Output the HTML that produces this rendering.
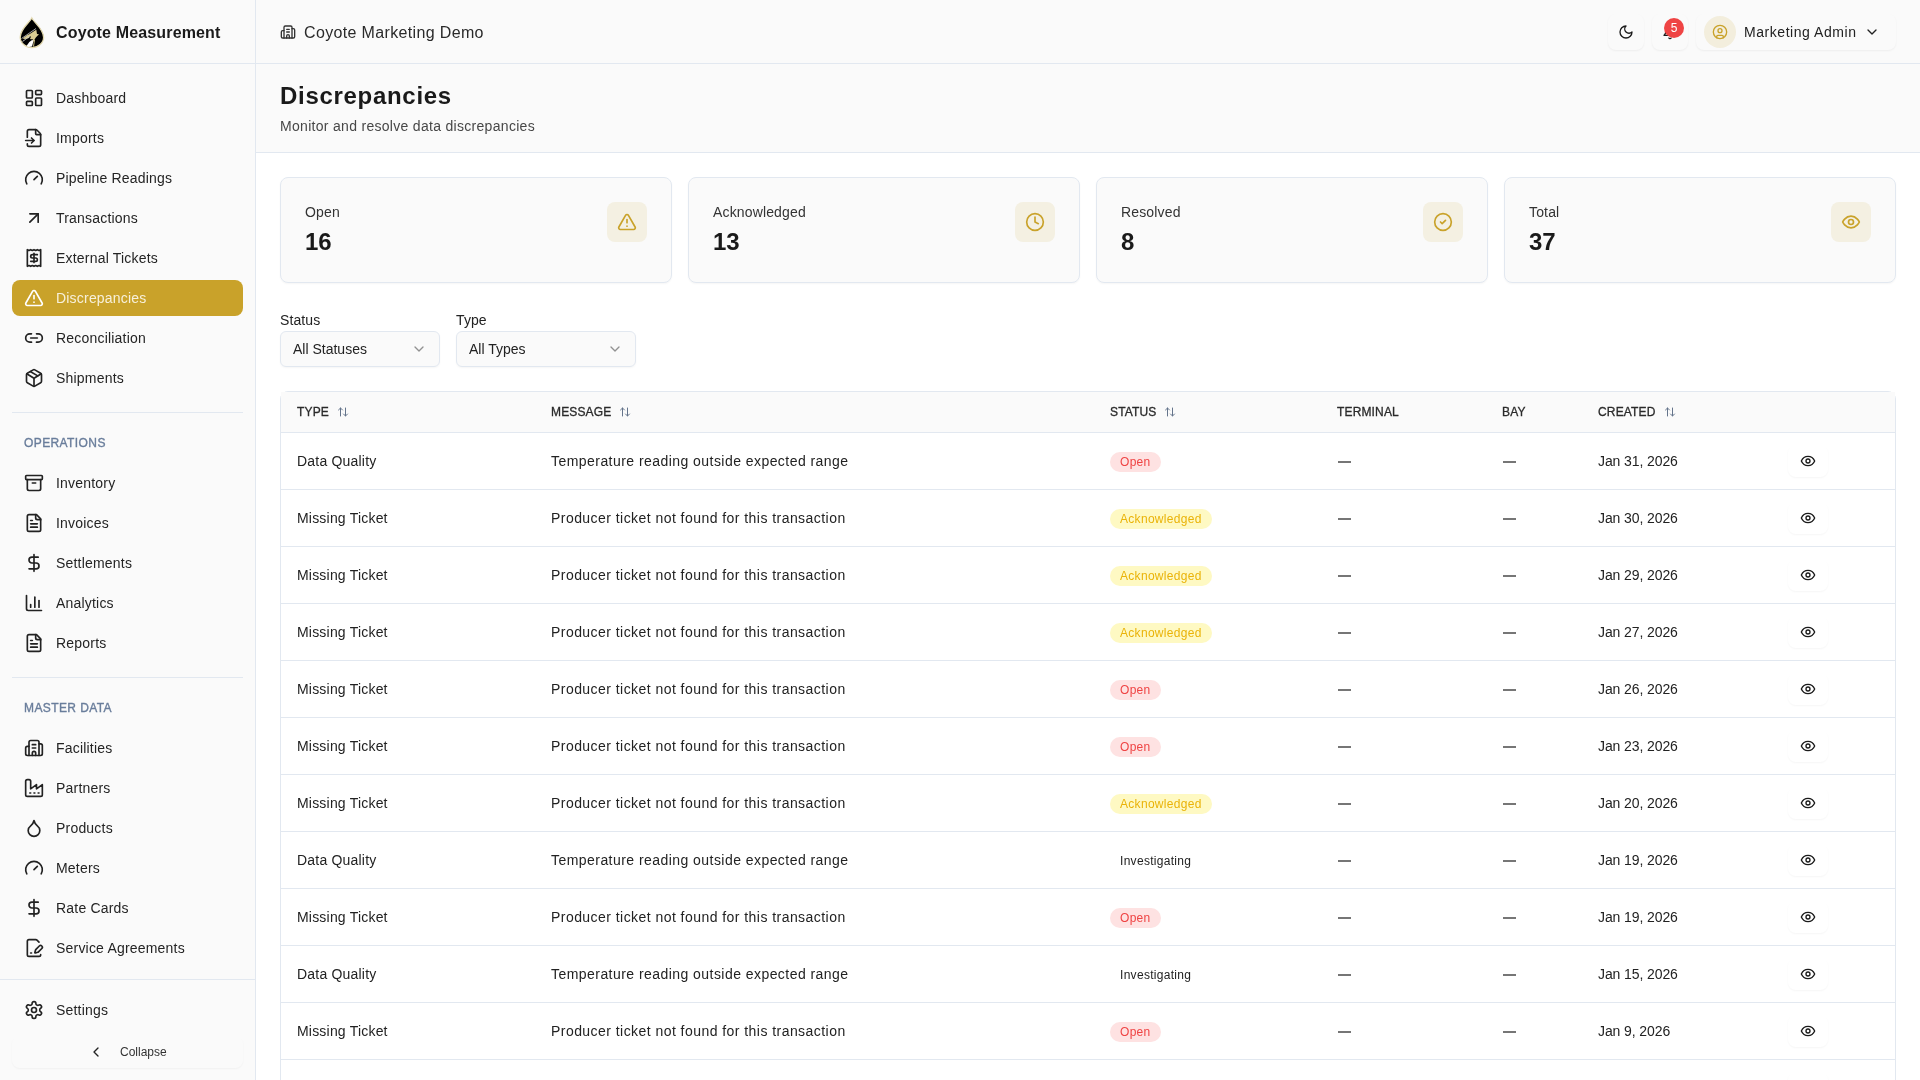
<!DOCTYPE html>
<html><head><meta charset="utf-8"><style>
*{box-sizing:border-box;margin:0;padding:0}
html,body{width:1920px;height:1080px;overflow:hidden;background:#fff;font-family:"Liberation Sans",sans-serif;color:#333}
svg.i{fill:none;stroke:currentColor;stroke-linecap:round;stroke-linejoin:round;display:block}
#sb{position:absolute;left:0;top:0;width:256px;height:1080px;background:#fafafa;border-right:1px solid #e2e8f0}
#sb .brand{position:absolute;left:0;top:0;width:255px;height:64px;border-bottom:1px solid #e2e8f0}
#sb .brand .t{position:absolute;left:56px;top:23px;font-size:16px;font-weight:bold;color:#1a1a1a;letter-spacing:0.15px;line-height:20px;white-space:nowrap}
.it{position:absolute;left:12px;width:231px;height:36px;border-radius:8px;color:#242424}
.it svg{position:absolute;left:12px;top:8px;color:#222}
.it span{position:absolute;left:44px;top:8px;font-size:14px;line-height:20px;letter-spacing:0.2px;white-space:nowrap}
.it.act{background:#c9a22a}
.it.act svg{color:#fff}
.it.act span{color:#f7f0da}
.sec{position:absolute;left:24px;margin-top:1px;font-size:12px;font-weight:normal;-webkit-text-stroke:0.35px #697d9b;letter-spacing:0.4px;color:#697d9b;line-height:16px}
.div{position:absolute;left:12px;width:231px;height:1px;background:#e2e8f0}
.foot{position:absolute;left:0;top:979px;width:255px;height:1px;background:#e2e8f0}
.collapse{position:absolute;left:12px;top:1036px;width:231px;height:32px;border-radius:8px;box-shadow:0 1px 2px rgba(0,0,0,0.04);color:#333}
.collapse svg{position:absolute;left:76px;top:8px;color:#222}
.collapse span{position:absolute;left:108px;top:8px;font-size:12px;line-height:16px}
#hd{position:absolute;left:256px;top:0;width:1664px;height:64px;background:#fafafa;border-bottom:1px solid #e2e8f0}
.org{position:absolute;left:24px;top:22px;height:20px}
.org svg{position:absolute;left:0;top:2px;color:#333}
.org span{position:absolute;left:24px;top:1px;font-size:16px;line-height:20px;white-space:nowrap;color:#2a2a2a;letter-spacing:0.35px}
.hbtn{position:absolute;top:14px;width:36px;height:36px;border-radius:8px;background:#fafafa;box-shadow:0 1px 2px rgba(0,0,0,0.05)}
.hbtn svg{position:absolute;left:10px;top:10px;color:#1a1a1a}
.badge{position:absolute;left:12px;top:4px;width:20px;height:20px;border-radius:10px;background:#ef4444;color:#fff;font-size:12px;line-height:20px;text-align:center}
.umenu{position:absolute;left:1440px;top:14px;width:200px;height:36px;border-radius:8px;background:#fafafa;box-shadow:0 1px 2px rgba(0,0,0,0.05)}
.umenu .av{position:absolute;left:8px;top:2px;width:32px;height:32px;border-radius:16px;background:#f3eedd;color:#c9a22a}
.umenu .av svg{position:absolute;left:8px;top:8px}
.umenu span{position:absolute;left:48px;top:8px;font-size:14px;line-height:20px;color:#222;white-space:nowrap;letter-spacing:0.55px}
.umenu > svg{position:absolute;left:168px;top:10px;color:#222}
#ph{position:absolute;left:256px;top:64px;width:1664px;height:89px;background:#fafafa;border-bottom:1px solid #e2e8f0}
#ph h1{position:absolute;left:24px;top:16px;font-size:24px;line-height:32px;font-weight:bold;color:#1a1a1a;white-space:nowrap;letter-spacing:0.7px}
#ph p{position:absolute;left:24px;top:52px;font-size:14px;line-height:20px;color:#474747;white-space:nowrap;letter-spacing:0.3px}
.card{position:absolute;top:177px;width:392px;height:106px;background:#fafafa;border:1px solid #e2e8f0;border-radius:8px;box-shadow:0 1px 2px rgba(0,0,0,0.04)}
.cl{position:absolute;left:24px;top:24px;font-size:14px;line-height:20px;color:#333;letter-spacing:0.15px}
.cn{position:absolute;left:24px;top:48px;font-size:24px;line-height:32px;font-weight:bold;color:#1a1a1a}
.cic{position:absolute;left:326px;top:24px;width:40px;height:40px;border-radius:8px;background:#f4f0e2;color:#c9a22a}
.cic svg{position:absolute;left:10px;top:10px}
.flabel{position:absolute;top:310px;font-size:14px;line-height:20px;color:#222;letter-spacing:0.1px}
.sel{position:absolute;top:331px;height:36px;background:#fafafa;border:1px solid #e2e8f0;border-radius:6px;box-shadow:0 1px 2px rgba(0,0,0,0.04)}
.sel span{position:absolute;left:12px;top:7px;font-size:14px;line-height:20px;color:#222;letter-spacing:0px}
.sel svg{position:absolute;right:12px;top:9px;color:#777;opacity:.8}
#tbl{position:absolute;left:280px;top:391px;width:1616px;height:760px;border:1px solid #e2e8f0;border-radius:8px;background:#fff}
.th{position:absolute;left:0;top:0;width:100%;height:41px;background:#fafafa;border-bottom:1px solid #e2e8f0}
.hc{position:absolute;top:12px;height:16px;font-size:12px;line-height:16px;font-weight:normal;-webkit-text-stroke:0.3px #2a2a2a;letter-spacing:0.15px;color:#2a2a2a;white-space:nowrap;display:flex;align-items:center}
.hc svg{margin-left:8px;color:#64748b}
.tr{position:absolute;left:0;width:100%;height:57px;border-bottom:1px solid #e2e8f0}
.c{position:absolute;top:18px;font-size:14px;line-height:20px;color:#222;white-space:nowrap;letter-spacing:0.3px}
.bdg{position:absolute;top:19px;letter-spacing:0.3px;height:20px;border-radius:10px;padding:0 10px;font-size:12px;line-height:20px;white-space:nowrap}
.b-open{background:#fee2e2;color:#ef4444}
.b-ack{background:#fef9c3;color:#eab308}
.b-inv{background:transparent;color:#222}
.dash{position:absolute;top:28px;width:12.6px;height:1.7px;background:#767676}
.eb{position:absolute;left:1507px;top:12px;width:40px;height:32px;border-radius:8px;box-shadow:0 1px 2px rgba(0,0,0,0.04)}
.eb svg{position:absolute;left:12px;top:8px;color:#1a1a1a}

.ls45{letter-spacing:0.45px}.ls2{letter-spacing:0.2px}.lsd{letter-spacing:-0.1px}
#root{position:absolute;left:0;top:0;width:1920px;height:1080px;will-change:transform}

</style></head><body><div id="root">
<div id="sb">
<div class="brand"><svg style="position:absolute;left:16px;top:14px" width="32" height="36" viewBox="0 0 32 36"><path d="M15.8 4 C17.8 8.3 27.6 15 27.6 23.3 A11.7 10.3 0 0 1 4.2 23.3 C4.2 15 13.8 8.3 15.8 4Z" fill="#000" stroke="#e3d9ae" stroke-width="1.3"/><path d="M6.5 24.5 L11 21.3 L13.3 20.3 L15.7 18.7 L18.7 16.7 L20.3 15.7 L21 20 L23 20.3 L20 23.3 L18.7 25.3 L17.7 28.5 L16.7 25.3 L14.7 25.3 L13.3 24 L9 25Z" fill="#d9cc92"/><path d="M10.5 32 L13.3 28 L15.7 26.3 L17.3 26 L17 28.7 L16 32.5 L12.7 32.9Z" fill="#fff"/><path d="M5.5 24.5 L20 14.5" stroke="#b8b8b8" stroke-width="0.9" fill="none"/><path d="M6.5 27.5 L14 22" stroke="#ccc" stroke-width="0.9" fill="none"/><path d="M10 31 L14.5 22.5" stroke="#000" stroke-width="1.2" fill="none"/><path d="M18.5 26 L17.5 32.5" stroke="#c9bd85" stroke-width="1" fill="none"/></svg>
<div class="t">Coyote Measurement</div></div>
<div class="it" style="top:80px"><svg class="i" style="" width="20" height="20" viewBox="0 0 24 24" stroke-width="2"><rect width="7" height="9" x="3" y="3" rx="1"/><rect width="7" height="5" x="14" y="3" rx="1"/><rect width="7" height="9" x="14" y="12" rx="1"/><rect width="7" height="5" x="3" y="16" rx="1"/></svg><span>Dashboard</span></div>
<div class="it" style="top:120px"><svg class="i" style="" width="20" height="20" viewBox="0 0 24 24" stroke-width="2"><path d="M4 11V4a2 2 0 0 1 2-2h8a2.4 2.4 0 0 1 1.706.706l3.588 3.588A2.4 2.4 0 0 1 20 8v12a2 2 0 0 1-2 2H6a2 2 0 0 1-2-2v-1"/><path d="M14 2v5a1 1 0 0 0 1 1h5"/><path d="M2 15h10"/><path d="m9 18 3-3-3-3"/></svg><span>Imports</span></div>
<div class="it" style="top:160px"><svg class="i" style="" width="20" height="20" viewBox="0 0 24 24" stroke-width="2"><path d="m12 14 4-4"/><path d="M3.34 19a10 10 0 1 1 17.32 0"/></svg><span>Pipeline Readings</span></div>
<div class="it" style="top:200px"><svg class="i" style="" width="20" height="20" viewBox="0 0 24 24" stroke-width="2"><path d="M7 7h10v10"/><path d="M7 17 17 7"/></svg><span>Transactions</span></div>
<div class="it" style="top:240px"><svg class="i" style="" width="20" height="20" viewBox="0 0 24 24" stroke-width="2"><path d="M4 2v20l2-1 2 1 2-1 2 1 2-1 2 1 2-1 2 1V2l-2 1-2-1-2 1-2-1-2 1-2-1-2 1Z"/><path d="M16 8h-6a2 2 0 1 0 0 4h4a2 2 0 1 1 0 4H8"/><path d="M12 17.5v-11"/></svg><span>External Tickets</span></div>
<div class="it act" style="top:280px"><svg class="i" style="" width="20" height="20" viewBox="0 0 24 24" stroke-width="2"><path d="m21.73 18-8-14a2 2 0 0 0-3.48 0l-8 14A2 2 0 0 0 4 21h16a2 2 0 0 0 1.73-3"/><path d="M12 9v4"/><path d="M12 17h.01"/></svg><span>Discrepancies</span></div>
<div class="it" style="top:320px"><svg class="i" style="" width="20" height="20" viewBox="0 0 24 24" stroke-width="2"><path d="M9 17H7A5 5 0 0 1 7 7h2"/><path d="M15 7h2a5 5 0 1 1 0 10h-2"/><line x1="8" x2="16" y1="12" y2="12"/></svg><span>Reconciliation</span></div>
<div class="it" style="top:360px"><svg class="i" style="" width="20" height="20" viewBox="0 0 24 24" stroke-width="2"><path d="M11 21.73a2 2 0 0 0 2 0l7-4A2 2 0 0 0 21 16V8a2 2 0 0 0-1-1.73l-7-4a2 2 0 0 0-2 0l-7 4A2 2 0 0 0 3 8v8a2 2 0 0 0 1 1.73z"/><path d="M12 22V12"/><path d="m3.3 7 7.703 4.734a2 2 0 0 0 1.994 0L20.7 7"/><path d="m7.5 4.27 9 5.15"/></svg><span>Shipments</span></div>
<div class="div" style="top:412px"></div>
<div class="sec" style="top:434px">OPERATIONS</div>
<div class="it" style="top:465px"><svg class="i" style="" width="20" height="20" viewBox="0 0 24 24" stroke-width="2"><rect width="20" height="5" x="2" y="3" rx="1"/><path d="M4 8v11a2 2 0 0 0 2 2h12a2 2 0 0 0 2-2V8"/><path d="M10 12h4"/></svg><span>Inventory</span></div>
<div class="it" style="top:505px"><svg class="i" style="" width="20" height="20" viewBox="0 0 24 24" stroke-width="2"><path d="M15 2H6a2 2 0 0 0-2 2v16a2 2 0 0 0 2 2h12a2 2 0 0 0 2-2V7Z"/><path d="M14 2v4a2 2 0 0 0 2 2h4"/><path d="M10 9H8"/><path d="M16 13H8"/><path d="M16 17H8"/></svg><span>Invoices</span></div>
<div class="it" style="top:545px"><svg class="i" style="" width="20" height="20" viewBox="0 0 24 24" stroke-width="2"><line x1="12" x2="12" y1="2" y2="22"/><path d="M17 5H9.5a3.5 3.5 0 0 0 0 7h5a3.5 3.5 0 0 1 0 7H6"/></svg><span>Settlements</span></div>
<div class="it" style="top:585px"><svg class="i" style="" width="20" height="20" viewBox="0 0 24 24" stroke-width="2"><path d="M3 3v16a2 2 0 0 0 2 2h16"/><path d="M18 17V9"/><path d="M13 17V5"/><path d="M8 17v-3"/></svg><span>Analytics</span></div>
<div class="it" style="top:625px"><svg class="i" style="" width="20" height="20" viewBox="0 0 24 24" stroke-width="2"><path d="M15 2H6a2 2 0 0 0-2 2v16a2 2 0 0 0 2 2h12a2 2 0 0 0 2-2V7Z"/><path d="M14 2v4a2 2 0 0 0 2 2h4"/><path d="M10 9H8"/><path d="M16 13H8"/><path d="M16 17H8"/></svg><span>Reports</span></div>
<div class="div" style="top:677px"></div>
<div class="sec" style="top:699px">MASTER DATA</div>
<div class="it" style="top:730px"><svg class="i" style="" width="20" height="20" viewBox="0 0 24 24" stroke-width="2"><path d="M10 12h4"/><path d="M10 8h4"/><path d="M14 21v-3a2 2 0 0 0-4 0v3"/><path d="M6 10H4a2 2 0 0 0-2 2v7a2 2 0 0 0 2 2h16a2 2 0 0 0 2-2V9a2 2 0 0 0-2-2h-2"/><path d="M6 21V5a2 2 0 0 1 2-2h8a2 2 0 0 1 2 2v16"/></svg><span>Facilities</span></div>
<div class="it" style="top:770px"><svg class="i" style="" width="20" height="20" viewBox="0 0 24 24" stroke-width="2"><path d="M2 20a2 2 0 0 0 2 2h16a2 2 0 0 0 2-2V8l-7 5V8l-7 5V4a2 2 0 0 0-2-2H4a2 2 0 0 0-2 2Z"/><path d="M17 18h1"/><path d="M12 18h1"/><path d="M7 18h1"/></svg><span>Partners</span></div>
<div class="it" style="top:810px"><svg class="i" style="" width="20" height="20" viewBox="0 0 24 24" stroke-width="2"><path d="M12 22a7 7 0 0 0 7-7c0-2-1-3.9-3-5.5s-3.5-4-4-6.5c-.5 2.5-2 4.9-4 6.5C6 11.1 5 13 5 15a7 7 0 0 0 7 7z"/></svg><span>Products</span></div>
<div class="it" style="top:850px"><svg class="i" style="" width="20" height="20" viewBox="0 0 24 24" stroke-width="2"><path d="m12 14 4-4"/><path d="M3.34 19a10 10 0 1 1 17.32 0"/></svg><span>Meters</span></div>
<div class="it" style="top:890px"><svg class="i" style="" width="20" height="20" viewBox="0 0 24 24" stroke-width="2"><line x1="12" x2="12" y1="2" y2="22"/><path d="M17 5H9.5a3.5 3.5 0 0 0 0 7h5a3.5 3.5 0 0 1 0 7H6"/></svg><span>Rate Cards</span></div>
<div class="it" style="top:930px"><svg class="i" style="" width="20" height="20" viewBox="0 0 24 24" stroke-width="2"><path d="m18 5-2.414-2.414A2 2 0 0 0 14.172 2H6a2 2 0 0 0-2 2v16a2 2 0 0 0 2 2h12a2 2 0 0 0 2-2"/><path d="M21.378 12.626a1 1 0 0 0-3.004-3.004l-4.01 4.012a2 2 0 0 0-.506.854l-.837 2.87a.5.5 0 0 0 .62.62l2.87-.837a2 2 0 0 0 .854-.506z"/><path d="M8 18h1"/></svg><span>Service Agreements</span></div>
<div class="foot"></div>
<div class="it" style="top:992px"><svg class="i" style="" width="20" height="20" viewBox="0 0 24 24" stroke-width="2"><path d="M12.22 2h-.44a2 2 0 0 0-2 2v.18a2 2 0 0 1-1 1.73l-.43.25a2 2 0 0 1-2 0l-.15-.08a2 2 0 0 0-2.73.73l-.22.38a2 2 0 0 0 .73 2.73l.15.1a2 2 0 0 1 1 1.72v.51a2 2 0 0 1-1 1.74l-.15.09a2 2 0 0 0-.73 2.73l.22.38a2 2 0 0 0 2.73.73l.15-.08a2 2 0 0 1 2 0l.43.25a2 2 0 0 1 1 1.73V20a2 2 0 0 0 2 2h.44a2 2 0 0 0 2-2v-.18a2 2 0 0 1 1-1.73l.43-.25a2 2 0 0 1 2 0l.15.08a2 2 0 0 0 2.73-.73l.22-.39a2 2 0 0 0-.73-2.73l-.15-.08a2 2 0 0 1-1-1.74v-.5a2 2 0 0 1 1-1.74l.15-.09a2 2 0 0 0 .73-2.73l-.22-.38a2 2 0 0 0-2.73-.73l-.15.08a2 2 0 0 1-2 0l-.43-.25a2 2 0 0 1-1-1.73V4a2 2 0 0 0-2-2z"/><circle cx="12" cy="12" r="3"/></svg><span>Settings</span></div>
<div class="collapse"><svg class="i" style="" width="16" height="16" viewBox="0 0 24 24" stroke-width="2"><path d="m15 18-6-6 6-6"/></svg><span>Collapse</span></div>
</div>
<div id="hd">
<div class="org"><svg class="i" style="" width="16" height="16" viewBox="0 0 24 24" stroke-width="2"><path d="M10 12h4"/><path d="M10 8h4"/><path d="M14 21v-3a2 2 0 0 0-4 0v3"/><path d="M6 10H4a2 2 0 0 0-2 2v7a2 2 0 0 0 2 2h16a2 2 0 0 0 2-2V9a2 2 0 0 0-2-2h-2"/><path d="M6 21V5a2 2 0 0 1 2-2h8a2 2 0 0 1 2 2v16"/></svg><span>Coyote Marketing Demo</span></div>
<div class="hbtn" style="left:1352px"><svg class="i" style="" width="16" height="16" viewBox="0 0 24 24" stroke-width="2"><path d="M12 3a6 6 0 0 0 9 9 9 9 0 1 1-9-9Z"/></svg></div>
<div class="hbtn" style="left:1396px"><svg class="i" style="" width="16" height="16" viewBox="0 0 24 24" stroke-width="2"><path d="M6 8a6 6 0 0 1 12 0c0 7 3 9 3 9H3s3-2 3-9"/><path d="M10.3 21a1.94 1.94 0 0 0 3.4 0"/></svg><div class="badge">5</div></div>
<div class="umenu"><div class="av"><svg class="i" style="" width="16" height="16" viewBox="0 0 24 24" stroke-width="2"><circle cx="12" cy="12" r="10"/><circle cx="12" cy="10" r="3"/><path d="M7 20.662V19a2 2 0 0 1 2-2h6a2 2 0 0 1 2 2v1.662"/></svg></div><span>Marketing Admin</span><svg class="i" style="" width="16" height="16" viewBox="0 0 24 24" stroke-width="2"><path d="m6 9 6 6 6-6"/></svg></div>
</div>
<div id="ph"><h1>Discrepancies</h1><p>Monitor and resolve data discrepancies</p></div>
<div class="card" style="left:280px"><div class="cl">Open</div><div class="cn">16</div><div class="cic"><svg class="i" style="" width="20" height="20" viewBox="0 0 24 24" stroke-width="2"><path d="m21.73 18-8-14a2 2 0 0 0-3.48 0l-8 14A2 2 0 0 0 4 21h16a2 2 0 0 0 1.73-3"/><path d="M12 9v4"/><path d="M12 17h.01"/></svg></div></div>
<div class="card" style="left:688px"><div class="cl">Acknowledged</div><div class="cn">13</div><div class="cic"><svg class="i" style="" width="20" height="20" viewBox="0 0 24 24" stroke-width="2"><circle cx="12" cy="12" r="10"/><polyline points="12 6 12 12 16 14"/></svg></div></div>
<div class="card" style="left:1096px"><div class="cl">Resolved</div><div class="cn">8</div><div class="cic"><svg class="i" style="" width="20" height="20" viewBox="0 0 24 24" stroke-width="2"><circle cx="12" cy="12" r="10"/><path d="m9 12 2 2 4-4"/></svg></div></div>
<div class="card" style="left:1504px"><div class="cl">Total</div><div class="cn">37</div><div class="cic"><svg class="i" style="" width="20" height="20" viewBox="0 0 24 24" stroke-width="2"><path d="M2 12s3-7 10-7 10 7 10 7-3 7-10 7-10-7-10-7Z"/><circle cx="12" cy="12" r="3"/></svg></div></div>
<div class="flabel" style="left:280px">Status</div>
<div class="sel" style="left:280px;width:160px"><span>All Statuses</span><svg class="i" style="" width="16" height="16" viewBox="0 0 24 24" stroke-width="2"><path d="m6 9 6 6 6-6"/></svg></div>
<div class="flabel" style="left:456px">Type</div>
<div class="sel" style="left:456px;width:180px"><span>All Types</span><svg class="i" style="" width="16" height="16" viewBox="0 0 24 24" stroke-width="2"><path d="m6 9 6 6 6-6"/></svg></div>
<div id="tbl">
<div class="th">
<div class="hc" style="left:16px">TYPE<svg class="i" style="" width="12" height="12" viewBox="0 0 24 24" stroke-width="2"><path d="m21 16-4 4-4-4"/><path d="M17 20V4"/><path d="m3 8 4-4 4 4"/><path d="M7 4v16"/></svg></div>
<div class="hc" style="left:270px">MESSAGE<svg class="i" style="" width="12" height="12" viewBox="0 0 24 24" stroke-width="2"><path d="m21 16-4 4-4-4"/><path d="M17 20V4"/><path d="m3 8 4-4 4 4"/><path d="M7 4v16"/></svg></div>
<div class="hc" style="left:829px">STATUS<svg class="i" style="" width="12" height="12" viewBox="0 0 24 24" stroke-width="2"><path d="m21 16-4 4-4-4"/><path d="M17 20V4"/><path d="m3 8 4-4 4 4"/><path d="M7 4v16"/></svg></div>
<div class="hc" style="left:1056px">TERMINAL</div>
<div class="hc" style="left:1221px">BAY</div>
<div class="hc" style="left:1317px">CREATED<svg class="i" style="" width="12" height="12" viewBox="0 0 24 24" stroke-width="2"><path d="m21 16-4 4-4-4"/><path d="M17 20V4"/><path d="m3 8 4-4 4 4"/><path d="M7 4v16"/></svg></div>
</div>
<div class="tr" style="top:41px">
<div class="c ls2" style="left:16px">Data Quality</div>
<div class="c ls45" style="left:270px">Temperature reading outside expected range</div>
<div class="bdg b-open" style="left:829px">Open</div>
<div class="dash" style="left:1057.2px"></div>
<div class="dash" style="left:1222.2px"></div>
<div class="c lsd" style="left:1317px">Jan 31, 2026</div>
<div class="eb"><svg class="i" style="" width="16" height="16" viewBox="0 0 24 24" stroke-width="2"><path d="M2 12s3-7 10-7 10 7 10 7-3 7-10 7-10-7-10-7Z"/><circle cx="12" cy="12" r="3"/></svg></div>
</div>
<div class="tr" style="top:98px">
<div class="c ls2" style="left:16px">Missing Ticket</div>
<div class="c ls45" style="left:270px">Producer ticket not found for this transaction</div>
<div class="bdg b-ack" style="left:829px">Acknowledged</div>
<div class="dash" style="left:1057.2px"></div>
<div class="dash" style="left:1222.2px"></div>
<div class="c lsd" style="left:1317px">Jan 30, 2026</div>
<div class="eb"><svg class="i" style="" width="16" height="16" viewBox="0 0 24 24" stroke-width="2"><path d="M2 12s3-7 10-7 10 7 10 7-3 7-10 7-10-7-10-7Z"/><circle cx="12" cy="12" r="3"/></svg></div>
</div>
<div class="tr" style="top:155px">
<div class="c ls2" style="left:16px">Missing Ticket</div>
<div class="c ls45" style="left:270px">Producer ticket not found for this transaction</div>
<div class="bdg b-ack" style="left:829px">Acknowledged</div>
<div class="dash" style="left:1057.2px"></div>
<div class="dash" style="left:1222.2px"></div>
<div class="c lsd" style="left:1317px">Jan 29, 2026</div>
<div class="eb"><svg class="i" style="" width="16" height="16" viewBox="0 0 24 24" stroke-width="2"><path d="M2 12s3-7 10-7 10 7 10 7-3 7-10 7-10-7-10-7Z"/><circle cx="12" cy="12" r="3"/></svg></div>
</div>
<div class="tr" style="top:212px">
<div class="c ls2" style="left:16px">Missing Ticket</div>
<div class="c ls45" style="left:270px">Producer ticket not found for this transaction</div>
<div class="bdg b-ack" style="left:829px">Acknowledged</div>
<div class="dash" style="left:1057.2px"></div>
<div class="dash" style="left:1222.2px"></div>
<div class="c lsd" style="left:1317px">Jan 27, 2026</div>
<div class="eb"><svg class="i" style="" width="16" height="16" viewBox="0 0 24 24" stroke-width="2"><path d="M2 12s3-7 10-7 10 7 10 7-3 7-10 7-10-7-10-7Z"/><circle cx="12" cy="12" r="3"/></svg></div>
</div>
<div class="tr" style="top:269px">
<div class="c ls2" style="left:16px">Missing Ticket</div>
<div class="c ls45" style="left:270px">Producer ticket not found for this transaction</div>
<div class="bdg b-open" style="left:829px">Open</div>
<div class="dash" style="left:1057.2px"></div>
<div class="dash" style="left:1222.2px"></div>
<div class="c lsd" style="left:1317px">Jan 26, 2026</div>
<div class="eb"><svg class="i" style="" width="16" height="16" viewBox="0 0 24 24" stroke-width="2"><path d="M2 12s3-7 10-7 10 7 10 7-3 7-10 7-10-7-10-7Z"/><circle cx="12" cy="12" r="3"/></svg></div>
</div>
<div class="tr" style="top:326px">
<div class="c ls2" style="left:16px">Missing Ticket</div>
<div class="c ls45" style="left:270px">Producer ticket not found for this transaction</div>
<div class="bdg b-open" style="left:829px">Open</div>
<div class="dash" style="left:1057.2px"></div>
<div class="dash" style="left:1222.2px"></div>
<div class="c lsd" style="left:1317px">Jan 23, 2026</div>
<div class="eb"><svg class="i" style="" width="16" height="16" viewBox="0 0 24 24" stroke-width="2"><path d="M2 12s3-7 10-7 10 7 10 7-3 7-10 7-10-7-10-7Z"/><circle cx="12" cy="12" r="3"/></svg></div>
</div>
<div class="tr" style="top:383px">
<div class="c ls2" style="left:16px">Missing Ticket</div>
<div class="c ls45" style="left:270px">Producer ticket not found for this transaction</div>
<div class="bdg b-ack" style="left:829px">Acknowledged</div>
<div class="dash" style="left:1057.2px"></div>
<div class="dash" style="left:1222.2px"></div>
<div class="c lsd" style="left:1317px">Jan 20, 2026</div>
<div class="eb"><svg class="i" style="" width="16" height="16" viewBox="0 0 24 24" stroke-width="2"><path d="M2 12s3-7 10-7 10 7 10 7-3 7-10 7-10-7-10-7Z"/><circle cx="12" cy="12" r="3"/></svg></div>
</div>
<div class="tr" style="top:440px">
<div class="c ls2" style="left:16px">Data Quality</div>
<div class="c ls45" style="left:270px">Temperature reading outside expected range</div>
<div class="bdg b-inv" style="left:829px">Investigating</div>
<div class="dash" style="left:1057.2px"></div>
<div class="dash" style="left:1222.2px"></div>
<div class="c lsd" style="left:1317px">Jan 19, 2026</div>
<div class="eb"><svg class="i" style="" width="16" height="16" viewBox="0 0 24 24" stroke-width="2"><path d="M2 12s3-7 10-7 10 7 10 7-3 7-10 7-10-7-10-7Z"/><circle cx="12" cy="12" r="3"/></svg></div>
</div>
<div class="tr" style="top:497px">
<div class="c ls2" style="left:16px">Missing Ticket</div>
<div class="c ls45" style="left:270px">Producer ticket not found for this transaction</div>
<div class="bdg b-open" style="left:829px">Open</div>
<div class="dash" style="left:1057.2px"></div>
<div class="dash" style="left:1222.2px"></div>
<div class="c lsd" style="left:1317px">Jan 19, 2026</div>
<div class="eb"><svg class="i" style="" width="16" height="16" viewBox="0 0 24 24" stroke-width="2"><path d="M2 12s3-7 10-7 10 7 10 7-3 7-10 7-10-7-10-7Z"/><circle cx="12" cy="12" r="3"/></svg></div>
</div>
<div class="tr" style="top:554px">
<div class="c ls2" style="left:16px">Data Quality</div>
<div class="c ls45" style="left:270px">Temperature reading outside expected range</div>
<div class="bdg b-inv" style="left:829px">Investigating</div>
<div class="dash" style="left:1057.2px"></div>
<div class="dash" style="left:1222.2px"></div>
<div class="c lsd" style="left:1317px">Jan 15, 2026</div>
<div class="eb"><svg class="i" style="" width="16" height="16" viewBox="0 0 24 24" stroke-width="2"><path d="M2 12s3-7 10-7 10 7 10 7-3 7-10 7-10-7-10-7Z"/><circle cx="12" cy="12" r="3"/></svg></div>
</div>
<div class="tr" style="top:611px">
<div class="c ls2" style="left:16px">Missing Ticket</div>
<div class="c ls45" style="left:270px">Producer ticket not found for this transaction</div>
<div class="bdg b-open" style="left:829px">Open</div>
<div class="dash" style="left:1057.2px"></div>
<div class="dash" style="left:1222.2px"></div>
<div class="c lsd" style="left:1317px">Jan 9, 2026</div>
<div class="eb"><svg class="i" style="" width="16" height="16" viewBox="0 0 24 24" stroke-width="2"><path d="M2 12s3-7 10-7 10 7 10 7-3 7-10 7-10-7-10-7Z"/><circle cx="12" cy="12" r="3"/></svg></div>
</div>
<div class="tr" style="top:668px">
<div class="c ls2" style="left:16px">Data Quality</div>
<div class="c ls45" style="left:270px">Temperature reading outside expected range</div>
<div class="bdg b-inv" style="left:829px">Investigating</div>
<div class="dash" style="left:1057.2px"></div>
<div class="dash" style="left:1222.2px"></div>
<div class="c lsd" style="left:1317px">Jan 8, 2026</div>
<div class="eb"><svg class="i" style="" width="16" height="16" viewBox="0 0 24 24" stroke-width="2"><path d="M2 12s3-7 10-7 10 7 10 7-3 7-10 7-10-7-10-7Z"/><circle cx="12" cy="12" r="3"/></svg></div>
</div>
</div>
</div></body></html>
